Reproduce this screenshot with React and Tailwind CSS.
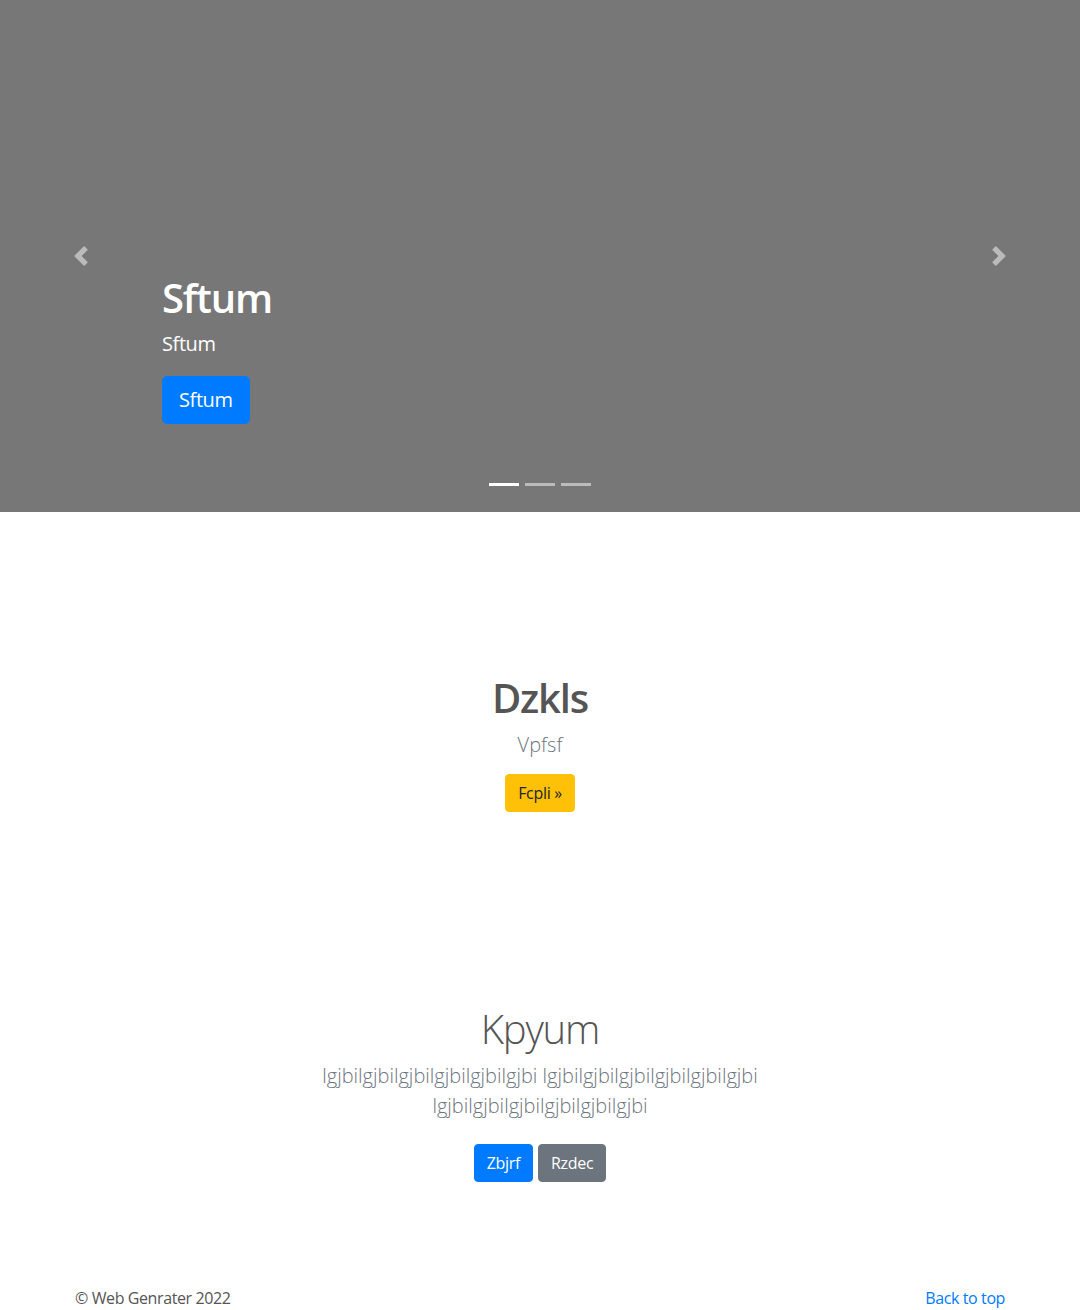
import React from 'react';

const font = { fontFamily: '"Open Sans", "Noto Sans", Arial, sans-serif' };

function Chevron({ dir }) {
  const d =
    dir === 'left'
      ? 'M5.25 0l-4 4 4 4 1.5-1.5L4.25 4l2.5-2.5L5.25 0z'
      : 'M2.75 0l-1.5 1.5L3.75 4l-2.5 2.5L2.75 8l4-4-4-4z';
  return (
    <svg viewBox="0 0 8 8" className="w-5 h-5" fill="#fff">
      <path d={d} />
    </svg>
  );
}

export default function App() {
  return (
    <div className="bg-white text-[#212529]" style={font}>
      {/* Carousel */}
      <div className="relative h-[512px] bg-[#777777] overflow-hidden">
        <button className="absolute left-0 top-0 bottom-0 w-[15%] flex items-center justify-center opacity-50">
          <Chevron dir="left" />
        </button>
        <button className="absolute right-0 top-0 bottom-0 w-[15%] flex items-center justify-center opacity-50">
          <Chevron dir="right" />
        </button>

        <div className="absolute left-[15%] right-[15%] bottom-12 py-5 text-white text-left">
          <h1 className="text-[40px] leading-[1.2] font-semibold tracking-[-0.03em] mb-2">Sftum</h1>
          <p className="text-[20px] leading-[1.4] tracking-[-0.02em] mb-[18px]">Sftum</p>
          <p className="mb-5">
            <a className="inline-block bg-[#007bff] border border-[#007bff] text-white text-[20px] leading-[1.5] tracking-[-0.02em] px-4 py-2 rounded-[5px]">
              Sftum
            </a>
          </p>
        </div>

        <div className="absolute bottom-[26px] left-0 right-0 flex justify-center gap-[6px]">
          <span className="w-[30px] h-[3px] bg-white" />
          <span className="w-[30px] h-[3px] bg-white opacity-50" />
          <span className="w-[30px] h-[3px] bg-white opacity-50" />
        </div>
      </div>

      {/* Feature */}
      <div className="pt-[162px] text-center">
        <h2 className="text-[40px] leading-[1.2] font-semibold tracking-[-0.03em] text-[#555555] mb-2">Dzkls</h2>
        <p className="text-[20px] leading-[1.5] font-light text-[#6c757d] mb-[14px]">Vpfsf</p>
        <a className="inline-block bg-[#ffc107] border border-[#ffc107] text-[#212529] text-[16px] leading-[1.5] tracking-[-0.02em] px-3 py-[6px] rounded">
          Fcpli »
        </a>
      </div>

      {/* Album intro */}
      <div className="pt-[193px] text-center">
        <div className="mx-auto w-[450px]">
          <h2 className="text-[40px] leading-[1.2] font-light tracking-[-0.03em] text-[#555555] mb-2">Kpyum</h2>
          <p className="text-[20px] leading-[1.5] font-light text-[#6c757d]">
            lgjbilgjbilgjbilgjbilgjbilgjbi lgjbilgjbilgjbilgjbilgjbilgjbi lgjbilgjbilgjbilgjbilgjbilgjbi
          </p>
          <div className="flex justify-center gap-[5px] mt-[23px]">
            <a className="inline-block bg-[#007bff] border border-[#007bff] text-white text-[16px] leading-[1.5] tracking-[-0.02em] px-3 py-[6px] rounded">
              Zbjrf
            </a>
            <a className="inline-block bg-[#6c757d] border border-[#6c757d] text-white text-[16px] leading-[1.5] tracking-[-0.02em] px-3 py-[6px] rounded">
              Rzdec
            </a>
          </div>
        </div>
      </div>

      {/* Footer */}
      <footer className="mt-[104px]">
        <div className="mx-auto max-w-[960px] px-[15px] flex justify-between text-[16px] leading-[1.5] tracking-[-0.025em]">
          <p className="text-[#555555]">© Web Genrater 2022</p>
          <a className="text-[#007bff]">Back to top</a>
        </div>
      </footer>
    </div>
  );
}
